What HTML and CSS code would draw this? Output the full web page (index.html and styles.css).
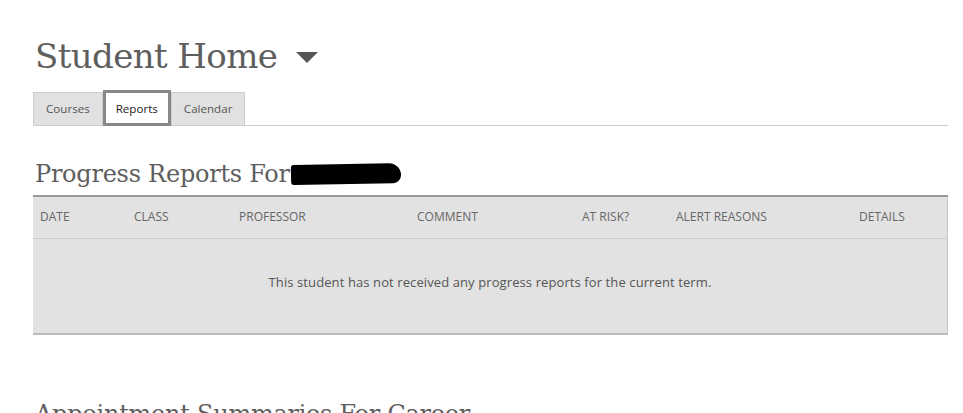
FILE: index.html
```html
<!DOCTYPE html>
<html lang="en">

<head>
  <meta charset="UTF-8">
  <meta name="viewport" content="width=device-width, initial-scale=1.0">
  <title>Student Home</title>
  <link rel="stylesheet" href="styles.css">
</head>

<body>
  <div class="page">

    <div class="title-row">
      <h1 class="title">Student Home</h1>
      <span class="caret"></span>
    </div>

    <ul class="tabs">
      <li class="tab">Courses</li>
      <li class="tab active">Reports</li>
      <li class="tab">Calendar</li>
    </ul>

    <h2 class="section-title">Progress Reports For <span class="redacted"></span></h2>

    <table class="reports">
      <colgroup>
        <col style="width: 94px">
        <col style="width: 105px">
        <col style="width: 178px">
        <col style="width: 165px">
        <col style="width: 94px">
        <col style="width: 183px">
        <col>
      </colgroup>
      <tr>
        <th>Date</th>
        <th>Class</th>
        <th>Professor</th>
        <th>Comment</th>
        <th>At Risk?</th>
        <th>Alert Reasons</th>
        <th>Details</th>
      </tr>
      <tr>
        <td colspan="7" class="empty">This student has not received any progress reports for the current term.</td>
      </tr>
    </table>

    <h2 class="section-title next">Appointment Summaries For Career</h2>

  </div>
</body>

</html>
```

FILE: styles.css
```css
body {
  margin: 0;
  font-family: 'Open Sans', sans-serif;
  color: #555;
  background: #fff;
  overflow: hidden;
  height: 413px;
}

.page {
  width: 915px;
  padding: 30px 0 0 33px;
}

.title-row {
  display: flex;
  align-items: center;
  gap: 19px;
  padding-left: 2px;
  height: 52px;
}

.title {
  margin: 0;
  font-family: 'DejaVu Serif', serif;
  font-weight: normal;
  font-size: 34px;
  color: #5e5e5e;
  letter-spacing: -0.6px;
}

.caret {
  width: 0;
  height: 0;
  border-left: 11px solid transparent;
  border-right: 11px solid transparent;
  border-top: 11px solid #555;
  margin-top: 2px;
}

.tabs {
  display: flex;
  list-style: none;
  margin: 10px 0 0;
  padding: 0;
  border-bottom: 1px solid #ccc;
  height: 33px;
}

.tab {
  box-sizing: border-box;
  height: 33px;
  padding: 0 12px;
  line-height: 31px;
  font-size: 11.6px;
  color: #555;
  background: #e1e1e1;
  border: 1px solid #ccc;
  border-bottom: none;
}

.tab.active {
  height: 36px;
  margin-top: -2px;
  padding: 0 10px;
  line-height: 32px;
  color: #222;
  background: #fff;
  border: 3px solid #888;
}

.section-title {
  margin: 26px 0 0;
  padding-left: 2px;
  font-family: 'DejaVu Serif', serif;
  font-weight: normal;
  font-size: 24px;
  color: #5e5e5e;
  letter-spacing: -0.25px;
  height: 43px;
  display: flex;
  align-items: center;
  box-sizing: border-box;
}

.redacted {
  display: inline-block;
  width: 110px;
  height: 20px;
  margin-left: 1px;
  background: #000;
  border-radius: 3px 12px 8px 3px;
  transform: rotate(-1deg);
}

.reports {
  width: 915px;
  table-layout: fixed;
  border-collapse: collapse;
  background: #e2e2e2;
  border-top: 2px solid #999;
  border-right: 1px solid #c4c4c4;
  border-bottom: 2px solid #bbb;
}

.reports th {
  height: 39px;
  padding: 0 7px 2px;
  text-align: left;
  font-weight: normal;
  font-size: 12px;
  text-transform: uppercase;
  color: #666;
  border-bottom: 1px solid #ccc;
}

.reports .empty {
  height: 95px;
  padding-bottom: 9px;
  box-sizing: border-box;
  text-align: center;
  font-size: 13px;
  letter-spacing: 0.1px;
  color: #555;
}

.section-title.next {
  margin-top: 58px;
}
```
